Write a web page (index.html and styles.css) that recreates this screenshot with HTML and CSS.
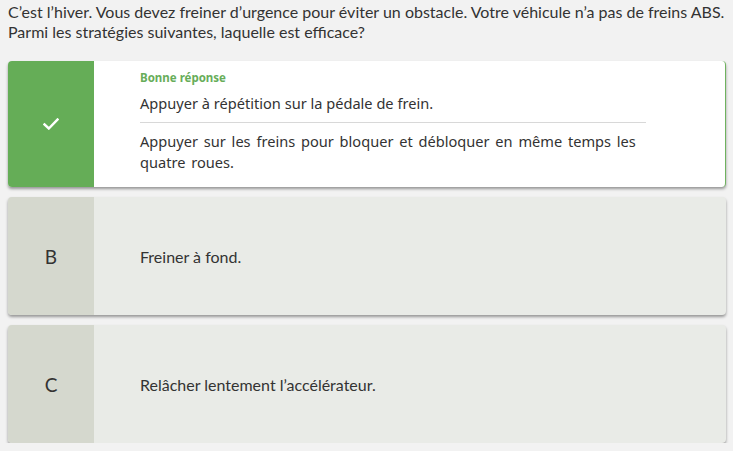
FILE: index.html
```html
<!DOCTYPE html>
<html lang="fr">
<head>
<meta charset="utf-8">
<link rel="stylesheet" href="styles.css">
</head>
<body>
<p class="question">C’est l’hiver. Vous devez freiner d’urgence pour éviter un obstacle. Votre véhicule n’a pas de freins ABS. Parmi les stratégies suivantes, laquelle est efficace?</p>
<div class="answers">
  <div class="card card-correct">
    <div class="marker marker-correct">
      <svg width="16" height="12" viewBox="0 0 16 12"><path d="M1.5 6.5 L5.8 10.5 L14.5 1.5" fill="none" stroke="#fff" stroke-width="2.4" stroke-linecap="square"/></svg>
    </div>
    <div class="content content-correct">
      <div class="label">Bonne réponse</div>
      <div class="line first">Appuyer à répétition sur la pédale de frein.</div>
      <div class="line second">Appuyer sur les freins pour bloquer et débloquer en même temps les quatre roues.</div>
    </div>
  </div>
  <div class="card">
    <div class="marker">B</div>
    <div class="content">Freiner à fond.</div>
  </div>
  <div class="card">
    <div class="marker">C</div>
    <div class="content">Relâcher lentement l’accélérateur.</div>
  </div>
</div>
</body>
</html>
```
FILE: styles.css
```css
html, body {
  margin: 0;
  padding: 0;
  background: #f2f2f2;
}
body {
  padding: 0 7px 0 8px;
  font-family: Lato, "Liberation Sans", sans-serif;
  color: #333;
}
.question {
  margin: 0;
  padding-top: 2px;
  font-size: 16px;
  line-height: 20px;
  color: #333;
}
.answers {
  display: flex;
  flex-direction: column;
  gap: 10px;
  margin-top: 19px;
}
.card {
  display: flex;
  height: 118px;
  background: #e9ebe7;
  border-radius: 4px;
  overflow: hidden;
  box-shadow: 0 2px 3px rgba(0, 0, 0, 0.38);
}
.card-correct {
  height: 126px;
  background: #fff;
  border-right: 1px solid #6fb25f;
}
.marker {
  flex: 0 0 86px;
  display: flex;
  align-items: center;
  justify-content: center;
  background: #d5d8ce;
  font-size: 19px;
  color: #333;
}
.marker-correct {
  background: #65ad57;
}
.content {
  flex: 1;
  display: flex;
  align-items: center;
  padding-left: 46px;
  font-size: 16px;
  color: #333;
}
.content-correct {
  display: block;
  padding-top: 10px;
  padding-right: 79px;
  font-family: "Noto Sans", "Open Sans", sans-serif;
  color: #333;
}
.label {
  font-size: 11.5px;
  font-weight: 700;
  color: #67ad59;
  line-height: 14px;
}
.line {
  font-size: 14.6px;
  line-height: 21px;
}
.first {
  padding: 8px 0 8px;
  border-bottom: 1px solid #d8d8d8;
}
.second {
  padding-top: 8px;
  word-spacing: 2px;
}
```
